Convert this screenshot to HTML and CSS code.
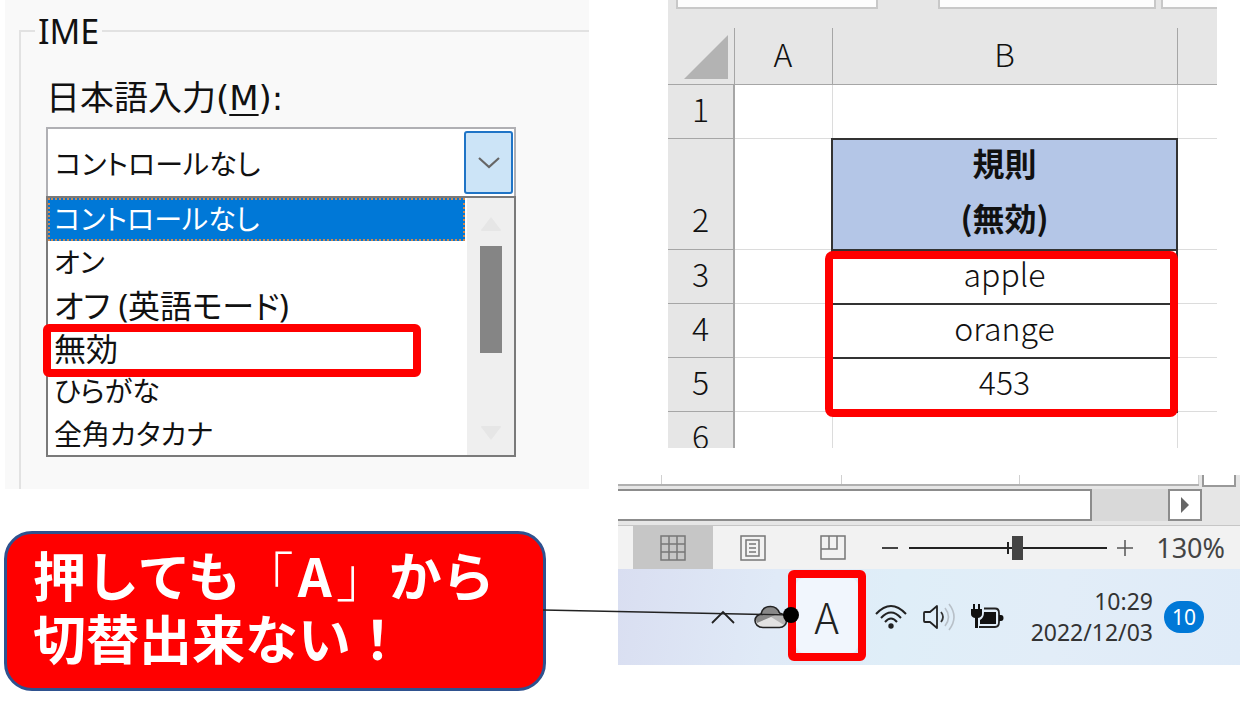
FILE: index.html
```html
<!DOCTYPE html>
<html lang="ja">
<head>
<meta charset="utf-8">
<title>日本語入力(IME)の規則</title>
<link rel="stylesheet" href="styles.css">
</head>
<body>
<main class="board">
  <div class="left">
    <section class="dialog">
      <fieldset class="group">
        <legend>IME</legend>
        <div class="field">
          <label for="ime">日本語入力(<u>M</u>):</label>
          <div class="combo">
            <select id="ime" class="combo-select">
              <option>コントロールなし</option>
              <option>オン</option>
              <option>オフ (英語モード)</option>
              <option>無効</option>
              <option>ひらがな</option>
              <option>全角カタカナ</option>
            </select>
            <span class="combo-arrow"><svg width="22" height="14" viewBox="0 0 22 14"><path d="M1 2l10 9 10-9" fill="none" stroke="#666" stroke-width="2.200"/></svg></span>
          </div>
          <div class="list">
            <ul class="options" role="listbox" aria-label="日本語入力">
              <li role="option" aria-selected="true" class="selected">コントロールなし</li>
              <li role="option">オン</li>
              <li role="option" class="kanji">オフ (英語モード)</li>
              <li role="option" class="kanji marked">無効</li>
              <li role="option">ひらがな</li>
              <li role="option">全角カタカナ</li>
            </ul>
            <div class="scroll">
              <svg width="22" height="16" viewBox="0 0 22 16"><path d="M11 1L21 14Q21 15 20 15H2Q1 15 1 14z" fill="#e6e6e6"/></svg>
              <span class="scroll-thumb"></span>
              <svg class="scroll-down" width="22" height="16" viewBox="0 0 22 16"><path d="M11 15L21 2Q21 1 20 1H2Q1 1 1 2z" fill="#e6e6e6"/></svg>
            </div>
          </div>
        </div>
      </fieldset>
    </section>
    <section class="callout">
      <p>押しても<span class="thin">「</span><span class="key">A</span><span class="thin">」</span>から<br>切替出来ない！</p>
      <svg class="connector" width="256" height="20" viewBox="0 0 256 20"><path d="M0 6L248 11" stroke="#222" stroke-width="1.4"/><circle cx="248" cy="11" r="8" fill="#000"/></svg>
    </section>
  </div>

  <div class="right">
    <section class="sheet">
      <div class="ribbon"><span class="box name"></span><span class="box tools"></span><span class="box formula"></span></div>
      <table class="grid">
        <colgroup><col class="c-num"><col class="c-a"><col class="c-b"><col></colgroup>
        <thead>
          <tr><th class="corner"><svg width="46" height="46" viewBox="0 0 46 46"><path d="M45 1V45H1z" fill="#b3b3b3"/></svg></th><th>A</th><th>B</th><th></th></tr>
        </thead>
        <tbody>
          <tr><th>1</th><td></td><td></td><td></td></tr>
          <tr class="tall"><th>2</th><td></td><td class="title"><div class="title-text">規則<br>(無効)</div></td><td></td></tr>
          <tr><th>3</th><td></td><td class="val first">apple</td><td></td></tr>
          <tr><th>4</th><td></td><td class="val">orange</td><td></td></tr>
          <tr><th>5</th><td></td><td class="val">453</td><td></td></tr>
          <tr><th>6</th><td></td><td></td><td></td></tr>
        </tbody>
      </table>
    </section>

    <section class="screen">
      <div class="cells"><div class="cells-row"><span></span><span></span><span></span><span></span></div><span class="vbox"></span></div>
      <div class="hscroll">
        <span class="hthumb"></span><span class="htrough"></span>
        <button class="hbtn" aria-label="右へスクロール"><svg width="10" height="16" viewBox="0 0 10 16"><path d="M1 0l8 8-8 8z" fill="#666"/></svg></button>
      </div>
      <div class="status">
        <button class="view active" aria-label="標準"><svg width="26" height="26" viewBox="0 0 26 26"><path d="M1 1H25V25H1zM9 1V25M17 1V25M1 9H25M1 17H25" fill="none" stroke="#777" stroke-width="1.5"/></svg></button>
        <button class="view" aria-label="ページ レイアウト"><svg width="26" height="26" viewBox="0 0 26 26"><path d="M1 1H25V25H1zM6 5H19V21H6zM9 9H16M9 13H16M9 17H16" fill="none" stroke="#777" stroke-width="1.5"/></svg></button>
        <button class="view" aria-label="改ページ プレビュー"><svg width="26" height="26" viewBox="0 0 26 26"><path d="M1 1H25V24H1zM1 14H17V1M9 1V14" fill="none" stroke="#777" stroke-width="1.5"/></svg></button>
        <button class="zoom-btn out" aria-label="縮小"><svg width="16" height="16" viewBox="0 0 16 16"><path d="M0 8H16" stroke="#444" stroke-width="2"/></svg></button>
        <input class="zoom" type="range" min="0" max="100" value="55" aria-label="ズーム">
        <button class="zoom-btn" aria-label="拡大"><svg width="16" height="16" viewBox="0 0 16 16"><path d="M0 8H16M8 0V16" stroke="#555" stroke-width="1.5"/></svg></button>
        <span class="percent">130%</span>
      </div>
      <div class="taskbar">
        <svg class="chev" width="26" height="16" viewBox="0 0 26 16"><path d="M2 14L13 3 24 14" fill="none" stroke="#222" stroke-width="1.8"/></svg>
        <svg class="cloud" width="34" height="24" viewBox="0 0 34 24"><path d="M9 22.500C4 22.500 1 19 1 15.500 1 12 4 9.500 7 9 8 4 12 1.500 16.500 1.500 21 1.500 24 4 25.500 8 29.500 9 32.500 11.500 32.500 15.500 32.500 19.500 29.500 22.500 25.500 22.500z" fill="#e2e2e2"/><path d="M1.500 14Q3 10 7 9C8 4 12 1.500 16.500 1.500 21 1.500 24 4 25.500 8L28 10 17 12 3 18z" fill="#888"/><path d="M17 12L25 8Q32 10 32 16L30 20z" fill="#b4b4b4"/><path d="M9 22.500C4 22.500 1 19 1 15.500 1 12 4 9.500 7 9 8 4 12 1.500 16.500 1.500 21 1.500 24 4 25.500 8 29.500 9 32.500 11.500 32.500 15.500 32.500 19.500 29.500 22.500 25.500 22.500z" fill="none" stroke="#222" stroke-width="1.600"/></svg>
        <button class="ime" aria-label="IME">A</button>
        <svg class="wifi" width="34" height="26" viewBox="0 0 34 26"><path d="M2 10Q17-6 32 10M7 14Q17 3 27 14M11 18Q17 11 23 18" fill="none" stroke="#222" stroke-width="2"/><circle cx="17" cy="22" r="2.700" fill="#222"/></svg>
        <svg class="tray" width="33" height="28" viewBox="0 0 33 28"><path d="M2 9H7L14 3V25L7 19H2Q1 19 1 18V10Q1 9 2 9z" fill="none" stroke="#222" stroke-width="1.800" stroke-linejoin="round"/><path d="M18 9Q22 14 18 19" fill="none" stroke="#333" stroke-width="1.800"/><path d="M22 5Q29 14 22 23M26 1Q36 14 26 27" fill="none" stroke="#b8c0c8" stroke-width="1.600"/></svg>
        <svg class="tray" width="33" height="26" viewBox="0 0 33 26"><path d="M3 0V5M8 0V5" stroke="#111" stroke-width="2"/><path d="M0 5H11V10Q11 13 7 14V24H4V14Q0 13 0 10z" fill="#111"/><path d="M13 4.500H24Q28 4.500 28 9V18Q28 23 24 23H8" fill="none" stroke="#222" stroke-width="1.800"/><path d="M13 8H25V20H9V16Q13 14 13 8zM28 11H30Q32.500 11 32.500 14T30 17H28z" fill="#111"/></svg>
        <div class="clock"><time>10:29</time><time>2022/12/03</time></div>
        <span class="badge">10</span>
      </div>
    </section>
  </div>
</main>
</body>
</html>
```
FILE: styles.css
```css
* { box-sizing: border-box; }
body {
  margin: 0;
  background: #fff;
  color: #111;
  font-family: "Noto Sans", "Noto Sans CJK JP", sans-serif;
}
button { margin: 0; padding: 0; border: 0; background: none; font: inherit; color: inherit; }
svg { display: block; flex: none; }

.board { display: grid; grid-template-columns: 618fr 622fr; overflow: hidden; }
.left, .right { min-width: 0; }

/* Dialog */
.dialog { margin: 0 29px 0 5px; background: #f9f9f9; overflow: hidden; font-size: 34px; }
.group {
  margin: 9px 0 0 14px;
  padding: 0 0 32px;
  border: solid #e2e2e2;
  border-width: 2px 0 0 2px;
  min-width: 0;
}
.group legend { margin-left: 14px; padding: 0 3px; line-height: 44px; }
.field { margin: 23px 73px 0 25px; }
.field label {
  display: block;
  line-height: 44px;
  font-family: "DejaVu Sans", "Noto Sans CJK JP", sans-serif;
}
.field u { text-underline-offset: 4px; text-decoration-thickness: 2px; }
.combo {
  display: grid;
  grid-template-columns: 1fr 49px;
  height: 69px;
  margin-top: 7px;
  padding: 2px 1px 2px 3px;
  border: 2px solid #b0b0b4;
  border-bottom: 0;
  background: #fff;
}
.combo-select {
  grid-area: 1 / 1 / 2 / 3;
  appearance: none;
  border: 0;
  padding: 2px 4px 0;
  background: none;
  color: #111;
  font: inherit;
  font-size: 28px;
  font-feature-settings: "palt";
}
.combo-arrow {
  grid-area: 1 / 2 / 2 / 3;
  display: grid;
  place-items: center;
  border: 2px solid #1f74c6;
  border-radius: 3px;
  background: #cce4f7;
  pointer-events: none;
}
.list { display: flex; height: 261px; border: 2px solid #7a7a7a; background: #fff; }
.options {
  flex: 1;
  margin: 0;
  padding: 0;
  list-style: none;
  font-size: 28px;
  line-height: 43px;
  font-feature-settings: "palt";
}
.options li { position: relative; padding-left: 6px; height: 43px; white-space: nowrap; }
.options .kanji { font-size: 32px; }
.options .selected { background: #0078d7; color: #fff; outline: 2px dotted #d08850; outline-offset: -2px; }
.marked::after {
  content: "";
  position: absolute;
  inset: -3px 44px -7px -5px;
  border: 8px solid #f00;
  border-radius: 6px;
}
.scroll {
  display: flex;
  flex-direction: column;
  align-items: center;
  width: 47px;
  margin-left: 2px;
  padding: 18px 0 14px;
  background: #efefef;
}
.scroll-thumb { width: 22px; height: 107px; margin-top: 14px; background: #858585; }
.scroll-down { margin-top: auto; }

/* Callout */
.callout {
  position: relative;
  z-index: 2;
  margin: 42px 72px 0 4px;
  padding: 9px 26px 19px;
  border: 3px solid #2f528f;
  border-radius: 28px;
  background: #f00;
  color: #fff;
}
.callout p {
  margin: 0;
  font: 700 53px/63px "Noto Sans CJK JP", sans-serif;
  white-space: nowrap;
}
.thin { font-weight: 300; }
.key { padding: 0 4px; }
.connector { position: absolute; left: 100%; top: 70px; }

/* Worksheet */
.sheet {
  height: 448px;
  margin: 0 23px 0 50px;
  overflow: hidden;
  background: #e6e6e6;
  font-family: "Noto Sans CJK JP", sans-serif;
  font-weight: 300;
}
.ribbon { display: flex; height: 28px; padding-left: 8px; }
.box { height: 9px; border: solid #c8c8c8; border-width: 0 2px 2px; background: #fdfdfd; }
.name { width: 202px; margin-right: 60px; }
.tools { width: 218px; margin-right: 5px; }
.formula { flex: 1; border-right: 0; }
.grid { width: 100%; table-layout: fixed; border-collapse: collapse; font-size: 32px; line-height: 40px; text-align: center; }
.c-num { width: 66px; }
.c-a { width: 98px; }
.c-b { width: 345px; }
.grid th, .grid td { height: 54px; padding: 0 0 7px; border: 1px solid #dcdcdc; background: #fff; }
.grid th { border-color: #a6a6a6; background: #e6e6e6; font-weight: 300; }
.grid tr > :first-child { border-left: 0; }
.grid tr > :last-child { border-right: 0; }
.grid thead th { height: 56px; border-top: 0; border-bottom: 1px solid #a6a6a6; }
.grid tbody th { border-right: 2px solid #a6a6a6; }
.grid .corner { padding: 6px 5px 4px 0; vertical-align: bottom; }
.corner svg { margin-left: auto; }
.grid .tall > * { height: 111px; vertical-align: bottom; padding-bottom: 11px; }
.grid .tall .title { padding: 0; border: 2px solid #333; background: #b4c6e7; font-weight: 700; line-height: 55px; vertical-align: top; }
.title-text { margin-top: -5px; }
.grid .val { position: relative; border: 2px solid #333; }
.grid .first { z-index: 1; }
.first::after {
  content: "";
  position: absolute;
  inset: 0 -2px -114px -8px;
  border: 8px solid #f00;
  border-radius: 8px;
}

/* Desktop strip */
.screen { margin-top: 27px; background: #e6e6e6; }
.cells { display: flex; height: 14px; }
.cells-row { flex: 1; display: grid; grid-template-columns: 44fr 180fr 179fr 179fr; height: 11px; border-bottom: 2px solid #b0b0b0; background: #fff; }
.cells-row span { border-right: 1px solid #d0d0d0; }
.vbox { width: 34px; height: 12px; margin: 0 4px 0 3px; border: solid #999; border-width: 0 2px 2px; background: #fff; }
.hscroll { display: flex; height: 37px; padding: 0 38px 4px 0; border-bottom: 1px solid #c6c6c6; }
.hthumb { flex: 1; border: solid #8c8c8c; border-width: 2px 2px 2px 0; background: #fff; }
.htrough { width: 76px; background: #d9d9d9; }
.hbtn { display: grid; place-items: center; width: 34px; border: 2px solid #8c8c8c; background: #fff; }
.status { display: flex; align-items: center; height: 43px; padding: 0 15px; background: #f2f2f2; }
.view { display: grid; place-items: center; width: 80px; height: 43px; }
.view.active { background: #c6c6c6; }
.out { margin-left: 9px; }
.zoom {
  appearance: none;
  flex: none;
  width: 198px;
  height: 24px;
  margin: 0 10px 0 11px;
  background:
    linear-gradient(#222, #222) 98px 50% / 2px 12px no-repeat,
    linear-gradient(#222, #222) 0 50% / 100% 2px no-repeat;
}
.zoom::-webkit-slider-thumb { appearance: none; width: 11px; height: 24px; background: #444; }
.percent { margin-left: auto; color: #444; font-size: 27px; line-height: 30px; }
.taskbar {
  display: flex;
  align-items: center;
  justify-content: flex-end;
  height: 96px;
  padding-right: 36px;
  background: linear-gradient(100deg, #d9def1, #e0eaf7 25%, #dfeef8 45%, #e2edf8 70%, #dfebf8);
}
.chev { margin-right: 18px; }
.ime {
  position: relative;
  width: 62px;
  height: 75px;
  margin: 0 16px 3px 8px;
  border-radius: 8px;
  background: #f1f6fd;
  color: #222;
  font: 300 42px/75px "Noto Sans CJK JP", sans-serif;
}
.ime::after {
  content: "";
  position: absolute;
  inset: -8px;
  border: 8px solid #f00;
  border-radius: 6px;
}
.tray { margin-left: 15px; }
.clock { display: grid; margin-left: 27px; color: #333; font-size: 23px; line-height: 31px; text-align: right; }
.badge {
  width: 40px;
  margin-left: 11px;
  border-radius: 16px;
  background: #0078d7;
  color: #fff;
  font-size: 21px;
  line-height: 32px;
  text-align: center;
}
```
